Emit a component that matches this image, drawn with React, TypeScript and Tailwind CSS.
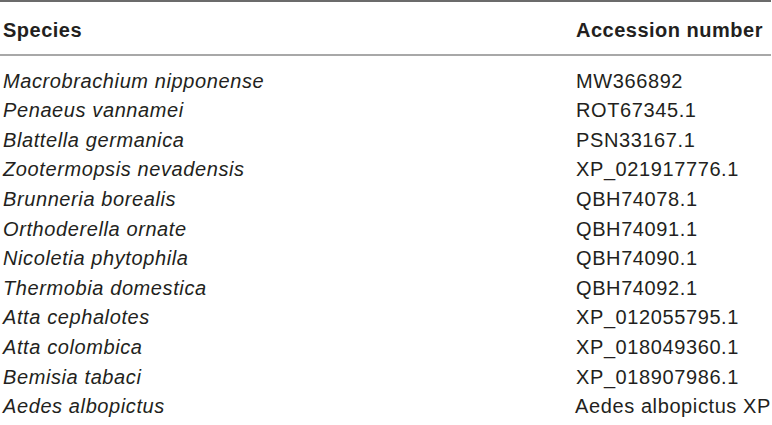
import React from "react";

const rows: [string, string][] = [
  ["Macrobrachium nipponense", "MW366892"],
  ["Penaeus vannamei", "ROT67345.1"],
  ["Blattella germanica", "PSN33167.1"],
  ["Zootermopsis nevadensis", "XP_021917776.1"],
  ["Brunneria borealis", "QBH74078.1"],
  ["Orthoderella ornate", "QBH74091.1"],
  ["Nicoletia phytophila", "QBH74090.1"],
  ["Thermobia domestica", "QBH74092.1"],
  ["Atta cephalotes", "XP_012055795.1"],
  ["Atta colombica", "XP_018049360.1"],
  ["Bemisia tabaci", "XP_018907986.1"],
  ["Aedes albopictus", "Aedes albopictus XP"],
];

export default function App() {
  return (
    <div
      className="w-[772px] h-[425px] bg-white overflow-hidden text-[#231f20]"
      style={{ fontFamily: '"Liberation Sans", Arial, sans-serif' }}
    >
      <div className="w-[771px] border-t-2 border-[#6b6b6b]">
        <div className="flex pt-[14px] pb-[8px] text-[20px] leading-[29.6px] font-bold tracking-[0.5px] border-b-2 border-[#a8a8a8]">
          <div className="w-[576px] pl-[3px]">Species</div>
          <div className="flex-1 whitespace-nowrap">Accession number</div>
        </div>
        <div className="pt-[11px]">
          {rows.map(([s, a]) => (
            <div key={s} className="flex text-[20px] leading-[29.6px] tracking-[0.6px]">
              <div className="w-[576px] pl-[3px] italic">{s}</div>
              <div className="flex-1 whitespace-nowrap">{a}</div>
            </div>
          ))}
        </div>
      </div>
    </div>
  );
}
